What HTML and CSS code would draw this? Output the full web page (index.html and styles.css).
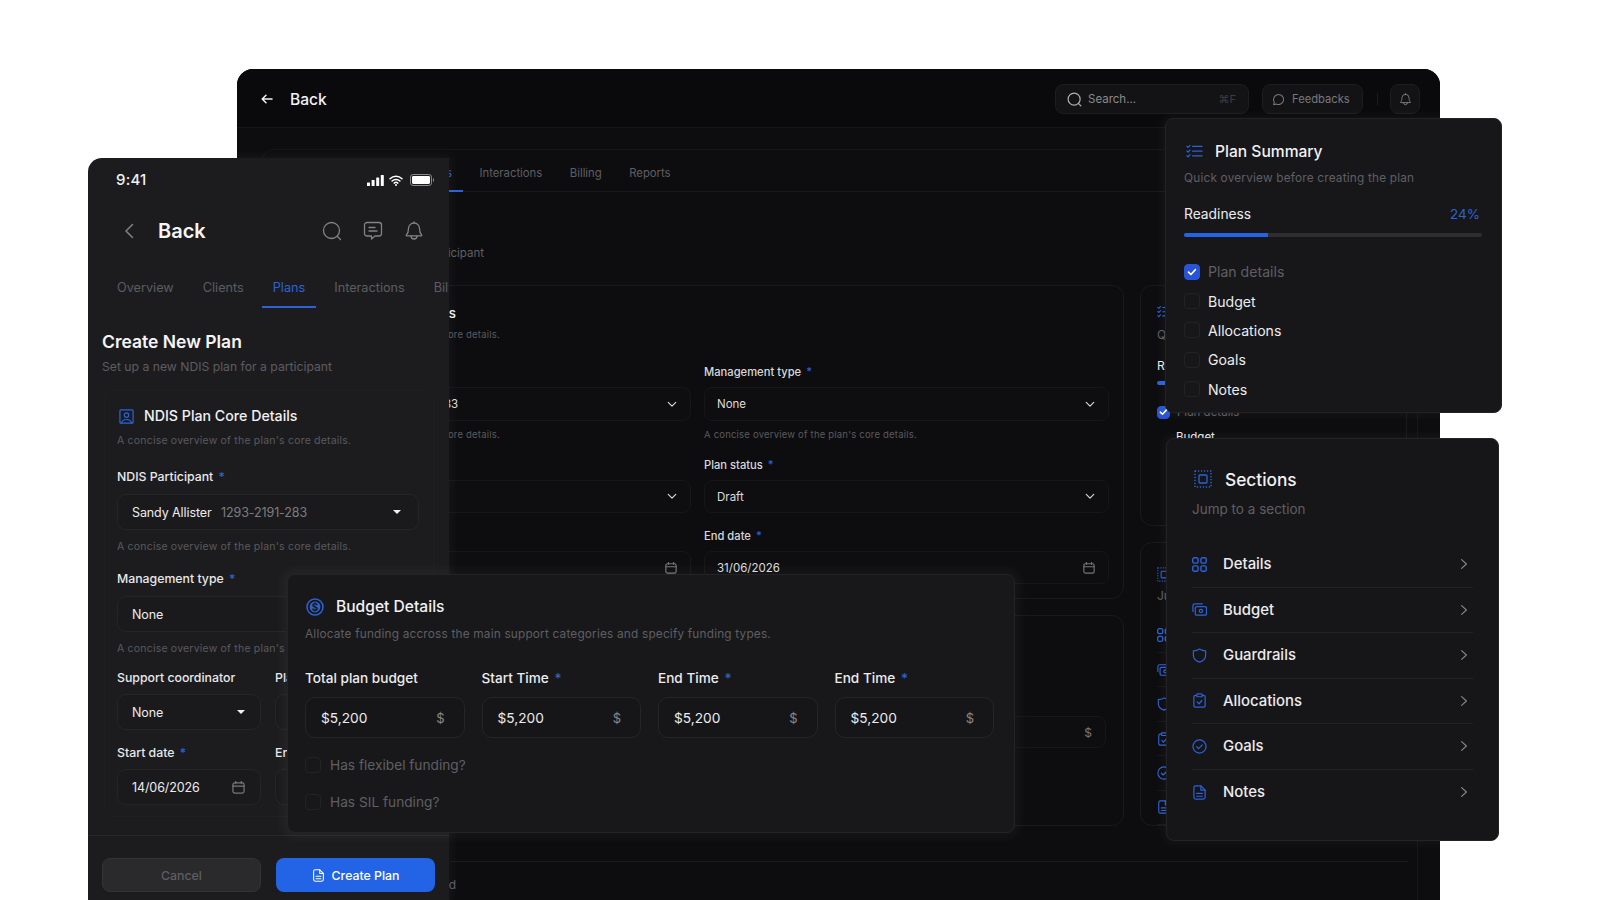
FILE: index.html
```html
<!DOCTYPE html>
<html lang="en">
<head>
<meta charset="utf-8">
<title>Create New Plan</title>
<link rel="stylesheet" href="styles.css">
</head>
<body>
<svg class="defs" aria-hidden="true">
  <symbol id="i-search" viewBox="0 0 20 20"><circle cx="9.5" cy="9.5" r="8"/><path d="M15.5 15.5l3 3"/></symbol>
  <symbol id="i-bubble" viewBox="0 0 16 16"><path d="M8 1.8a6.2 6.2 0 1 1-2.8 11.7L2 14.4l.9-3.1A6.2 6.2 0 0 1 8 1.8z"/></symbol>
  <symbol id="i-bell" viewBox="0 0 20 20"><path d="M10 2a5.5 5.5 0 0 0-5.5 5.5c0 3.6-.9 5.2-2.2 6.6-.2.3 0 .7.3.7h14.8c.4 0 .5-.4.3-.7-1.3-1.4-2.2-3-2.2-6.6A5.5 5.5 0 0 0 10 2z"/><path d="M10 1v1M7 15a3 3 0 0 0 6 0"/></symbol>
  <symbol id="i-chat" viewBox="0 0 20 20"><path d="M4 1.5h12A2.5 2.5 0 0 1 18.500 4v8.500a2.500 2.500 0 0 1-2.500 2.500h-4l-3.500 3v-3H4a2.500 2.500 0 0 1-2.500-2.500V4A2.500 2.500 0 0 1 4 1.500z"/><path d="M6 6.500h6M6 10h8"/></symbol>
  <symbol id="i-chev-r" viewBox="0 0 10 14"><path d="M2 1.500L8 7l-6 5.500"/></symbol>
  <symbol id="i-chev-d" viewBox="0 0 12 8"><path d="M1.500 1.500L6 6l4.500-4.500"/></symbol>
  <symbol id="i-cal" viewBox="0 0 14 14"><rect x="1" y="2" width="12" height="11" rx="2"/><path d="M1 5.500h12M4 .5v2M10 .5v2"/></symbol>
  <symbol id="i-list" viewBox="0 0 18 14"><path d="M1 2l1.200 1.200L4.200 1M1 7l1.200 1.200L4.200 6M1 12l1.200 1.200L4.200 11M7 2.200h10M7 7.200h10M7 12.200h10"/></symbol>
  <symbol id="i-sect" viewBox="0 0 18 18"><rect x="1" y="1" width="16" height="16" stroke-dasharray="1.200 1.800" stroke-linecap="butt" stroke-width="1.500"/><rect x="5" y="5" width="8" height="8" rx="1"/></symbol>
  <symbol id="i-grid" viewBox="0 0 14 14"><rect x=".7" y=".7" width="5" height="5" rx="1.500"/><rect x="8.300" y=".7" width="5" height="5" rx="1.500"/><rect x=".7" y="8.300" width="5" height="5" rx="1.500"/><rect x="8.300" y="8.300" width="5" height="5" rx="1.500"/></symbol>
  <symbol id="i-money" viewBox="0 0 16 14"><path d="M1 9V3a2 2 0 0 1 2-2h8"/><rect x="3.500" y="4" width="12" height="9" rx="1.500"/><circle cx="9.500" cy="8.500" r="1.700"/></symbol>
  <symbol id="i-shield" viewBox="0 0 16 16"><path d="M8 1c2 1.300 4 2 6.500 2v5c0 3.400-2.600 5.700-6.500 7C4.100 13.700 1.500 11.400 1.500 8V3C4 3 6 2.300 8 1z"/></symbol>
  <symbol id="i-clip" viewBox="0 0 14 16"><path d="M4 2.500H2.500A1.500 1.500 0 0 0 1 4v9.500A1.500 1.500 0 0 0 2.500 15h9a1.500 1.500 0 0 0 1.500-1.500V4a1.500 1.500 0 0 0-1.500-1.500H10"/><rect x="4" y="1" width="6" height="3" rx="1"/><path d="M4.500 9.500l2 2 3-3.500"/></symbol>
  <symbol id="i-goal" viewBox="0 0 16 16"><circle cx="8" cy="8" r="7"/><path d="M5 8.300l2.100 2 3.900-4"/></symbol>
  <symbol id="i-file" viewBox="0 0 14 16"><path d="M8.500 1H3a2 2 0 0 0-2 2v10a2 2 0 0 0 2 2h8a2 2 0 0 0 2-2V5.500z"/><path d="M8.500 1v4.500H13M4 9h6M4 12h6"/></symbol>
  <symbol id="i-person" viewBox="0 0 16 16"><rect x="1" y="1" width="14" height="14" rx="1"/><circle cx="8" cy="6.500" r="2.400"/><path d="M2.500 15c.8-2.500 2.700-3.800 5.500-3.800s4.700 1.300 5.500 3.800"/></symbol>
</svg>

<main class="canvas">

  <section class="win desktop">
    <header class="d-head">
      <svg class="ic d-arrow" viewBox="0 0 12 10"><path d="M11 5H1.500M5 1.200L1.200 5 5 8.800"/></svg>
      <span class="d-back">Back</span>
      <div class="d-tools">
        <div class="d-search">
          <svg class="ic d-search-ic"><use href="#i-search"/></svg>
          <span class="d-search-text">Search...</span>
          <span class="d-kbd">⌘F</span>
        </div>
        <div class="d-btn">
          <svg class="ic s13"><use href="#i-bubble"/></svg>
          <span>Feedbacks</span>
        </div>
        <span class="d-sep"></span>
        <div class="d-bell"><svg class="ic s13"><use href="#i-bell"/></svg></div>
      </div>
    </header>
    <div class="d-main">
      <nav class="d-tabs">
        <span class="d-tab">Overview</span>
        <span class="d-tab">Clients</span>
        <span class="d-tab active">Plans</span>
        <span class="d-tab">Interactions</span>
        <span class="d-tab">Billing</span>
        <span class="d-tab">Reports</span>
      </nav>
      <div class="d-title">
        <h2>Create New Plan</h2>
        <p>Set up a new NDIS plan for a participant</p>
      </div>
      <div class="d-columns">
        <div class="d-left">
          <div class="d-card d-card-a">
            <h3>NDIS Plan Core Details</h3>
            <p class="d-help d-cardsub">A concise overview of the plan's core details.</p>
            <div class="d-grid">
              <div class="d-field">
                <label>NDIS Participant <b>*</b></label>
                <div class="d-ctl"><span>Sandy Allister 1293-2191-283</span><svg class="ic d-chev"><use href="#i-chev-d"/></svg></div>
                <p class="d-help">A concise overview of the plan's core details.</p>
              </div>
              <div class="d-field">
                <label>Management type <b>*</b></label>
                <div class="d-ctl"><span>None</span><svg class="ic d-chev"><use href="#i-chev-d"/></svg></div>
                <p class="d-help">A concise overview of the plan's core details.</p>
              </div>
              <div class="d-field d-field-low">
                <label>Support coordinator</label>
                <div class="d-ctl"><span>None</span><svg class="ic d-chev"><use href="#i-chev-d"/></svg></div>
              </div>
              <div class="d-field d-field-low">
                <label>Plan status <b>*</b></label>
                <div class="d-ctl"><span>Draft</span><svg class="ic d-chev"><use href="#i-chev-d"/></svg></div>
              </div>
              <div class="d-field d-field-low">
                <label>Start date <b>*</b></label>
                <div class="d-ctl"><span>14/06/2026</span><svg class="ic s12 dim"><use href="#i-cal"/></svg></div>
              </div>
              <div class="d-field d-field-low">
                <label>End date <b>*</b></label>
                <div class="d-ctl"><span>31/06/2026</span><svg class="ic s12 dim"><use href="#i-cal"/></svg></div>
              </div>
            </div>
          </div>
          <div class="d-card d-card-b">
            <div class="d-ctl d-money"><span>$5,200</span><span class="dim">$</span></div>
          </div>
        </div>
        <aside class="d-right">
          <div class="d-card d-side-a">
            <svg class="ic s15 blue"><use href="#i-list"/></svg>
            <p class="ds-q">Quick overview</p>
            <p class="ds-r">Readiness</p>
            <div class="ds-bar"></div>
            <div class="ds-check"><span class="check on small"><svg viewBox="0 0 12 12"><path d="M2.500 6.200l2.400 2.300 4.400-4.800"/></svg></span><span>Plan details</span></div>
            <div class="ds-row">Budget</div>
          </div>
          <div class="d-card d-side-b">
            <svg class="ic s15 blue"><use href="#i-sect"/></svg>
            <p class="ds-j">Jump to a section</p>
            <ul class="ds-icons">
              <li><svg class="ic s14 blue"><use href="#i-grid"/></svg></li>
              <li><svg class="ic s14 blue"><use href="#i-money"/></svg></li>
              <li><svg class="ic s14 blue"><use href="#i-shield"/></svg></li>
              <li><svg class="ic s14 blue"><use href="#i-clip"/></svg></li>
              <li><svg class="ic s14 blue"><use href="#i-goal"/></svg></li>
              <li><svg class="ic s14 blue"><use href="#i-file"/></svg></li>
            </ul>
          </div>
        </aside>
      </div>
      <footer class="d-foot"><span>Draft saved</span></footer>
    </div>
  </section>

  <section class="win phone">
    <div class="p-status">
      <span class="p-time">9:41</span>
      <div class="p-sys">
        <svg class="p-signal" viewBox="0 0 17 11"><rect x="0" y="7.500" width="3" height="3.500" rx=".6"/><rect x="4.600" y="5" width="3" height="6" rx=".6"/><rect x="9.200" y="2.500" width="3" height="8.500" rx=".6"/><rect x="13.800" y="0" width="3" height="11" rx=".6"/></svg>
        <svg class="p-wifi" viewBox="0 0 14 11"><path d="M1 3.800a8.600 8.600 0 0 1 12 0M3.100 6a5.600 5.600 0 0 1 7.800 0M5.200 8.100a2.600 2.600 0 0 1 3.600 0"/><circle cx="7" cy="9.900" r="1"/></svg>
        <svg class="p-batt" viewBox="0 0 24 12"><rect x=".5" y=".5" width="21" height="11" rx="2.600" fill="none" stroke="#8a8a8c"/><rect x="2" y="2" width="18" height="8" rx="1.400"/><path d="M23 4v4c.7-.3 1-1 1-2s-.3-1.700-1-2z" fill="#8a8a8c"/></svg>
      </div>
    </div>
    <div class="p-nav">
      <svg class="ic p-chev" viewBox="0 0 10 16"><path d="M8.500 1.500L2 8l6.500 6.500"/></svg>
      <span class="p-back">Back</span>
      <div class="p-actions">
        <svg class="ic s20"><use href="#i-search"/></svg>
        <svg class="ic s20"><use href="#i-chat"/></svg>
        <svg class="ic s20"><use href="#i-bell"/></svg>
      </div>
    </div>
    <nav class="p-tabs">
      <span class="p-tab">Overview</span>
      <span class="p-tab">Clients</span>
      <span class="p-tab active">Plans</span>
      <span class="p-tab">Interactions</span>
      <span class="p-tab">Billing</span>
    </nav>
    <div class="p-body">
      <h1 class="p-title">Create New Plan</h1>
      <p class="p-sub">Set up a new NDIS plan for a participant</p>
      <div class="p-card">
        <div class="p-card-head">
          <svg class="ic s15 blue"><use href="#i-person"/></svg>
          <h2>NDIS Plan Core Details</h2>
        </div>
        <p class="p-help p-help-top">A concise overview of the plan's core details.</p>
        <label class="p-label p-first">NDIS Participant <b>*</b></label>
        <div class="p-ctl"><span>Sandy Allister <i class="p-code">1293-2191-283</i></span><span class="caret"></span></div>
        <p class="p-help">A concise overview of the plan's core details.</p>
        <label class="p-label">Management type <b>*</b></label>
        <div class="p-ctl"><span>None</span><span class="caret"></span></div>
        <p class="p-help">A concise overview of the plan's core details.</p>
        <div class="p-two">
          <div>
            <label class="p-label">Support coordinator</label>
            <div class="p-ctl"><span>None</span><span class="caret"></span></div>
          </div>
          <div>
            <label class="p-label">Plan status <b>*</b></label>
            <div class="p-ctl"><span>Draft</span><span class="caret"></span></div>
          </div>
          <div>
            <label class="p-label p-label-date">Start date <b>*</b></label>
            <div class="p-ctl"><span>14/06/2026</span><svg class="ic s13 dim"><use href="#i-cal"/></svg></div>
          </div>
          <div>
            <label class="p-label p-label-date">End date <b>*</b></label>
            <div class="p-ctl"><span>31/06/2026</span><svg class="ic s13 dim"><use href="#i-cal"/></svg></div>
          </div>
        </div>
      </div>
    </div>
    <footer class="p-foot">
      <button class="btn btn-off" type="button">Cancel</button>
      <button class="btn btn-main" type="button"><svg class="ic s13"><use href="#i-file"/></svg>Create Plan</button>
    </footer>
  </section>

  <section class="win budget">
    <div class="b-head">
      <svg class="ic b-ic" viewBox="0 0 18 18"><circle cx="9" cy="9" r="8"/><circle class="solid" cx="9" cy="9" r="5.400"/></svg>
      <span class="b-dollar">$</span>
      <h2>Budget Details</h2>
    </div>
    <p class="b-sub">Allocate funding accross the main support categories and specify funding types.</p>
    <div class="b-grid">
      <div><label class="b-label">Total plan budget</label><div class="b-ctl"><span>$5,200</span><span class="b-unit">$</span></div></div>
      <div><label class="b-label">Start Time <b>*</b></label><div class="b-ctl"><span>$5,200</span><span class="b-unit">$</span></div></div>
      <div><label class="b-label">End Time <b>*</b></label><div class="b-ctl"><span>$5,200</span><span class="b-unit">$</span></div></div>
      <div><label class="b-label">End Time <b>*</b></label><div class="b-ctl"><span>$5,200</span><span class="b-unit">$</span></div></div>
    </div>
    <div class="b-check b-check-1"><span class="check"></span><span>Has flexibel funding?</span></div>
    <div class="b-check"><span class="check"></span><span>Has SIL funding?</span></div>
  </section>

  <section class="win summary">
    <div class="s-head">
      <svg class="ic sum-ic blue"><use href="#i-list"/></svg>
      <h2>Plan Summary</h2>
    </div>
    <p class="s-sub">Quick overview before creating the plan</p>
    <div class="s-ready"><span>Readiness</span><span class="s-pct">24%</span></div>
    <div class="s-bar"><div class="s-fill" style="width:28.3%"></div></div>
    <ul class="s-list">
      <li class="off"><span class="check on"><svg viewBox="0 0 12 12"><path d="M2.500 6.200l2.400 2.300 4.400-4.800"/></svg></span>Plan details</li>
      <li><span class="check"></span>Budget</li>
      <li><span class="check"></span>Allocations</li>
      <li><span class="check"></span>Goals</li>
      <li><span class="check"></span>Notes</li>
    </ul>
  </section>

  <section class="win sections">
    <div class="n-head">
      <svg class="ic n-ic blue"><use href="#i-sect"/></svg>
      <h2>Sections</h2>
    </div>
    <p class="n-sub">Jump to a section</p>
    <ul class="n-list">
      <li><svg class="ic s15 blue"><use href="#i-grid"/></svg><span>Details</span><svg class="ic n-chev"><use href="#i-chev-r"/></svg></li>
      <li><svg class="ic s15 blue"><use href="#i-money"/></svg><span>Budget</span><svg class="ic n-chev"><use href="#i-chev-r"/></svg></li>
      <li><svg class="ic s15 blue"><use href="#i-shield"/></svg><span>Guardrails</span><svg class="ic n-chev"><use href="#i-chev-r"/></svg></li>
      <li><svg class="ic s15 blue"><use href="#i-clip"/></svg><span>Allocations</span><svg class="ic n-chev"><use href="#i-chev-r"/></svg></li>
      <li><svg class="ic s15 blue"><use href="#i-goal"/></svg><span>Goals</span><svg class="ic n-chev"><use href="#i-chev-r"/></svg></li>
      <li><svg class="ic s15 blue"><use href="#i-file"/></svg><span>Notes</span><svg class="ic n-chev"><use href="#i-chev-r"/></svg></li>
    </ul>
  </section>

</main>
</body>
</html>
```

FILE: styles.css
```css
* { box-sizing: border-box; }
html, body { margin: 0; padding: 0; background: #fff; }
body { font-family: Inter, "Liberation Sans", sans-serif; color: #f1f1f3; overflow: hidden; }
h1, h2, h3, p, ul { margin: 0; padding: 0; font-weight: inherit; }
ul { list-style: none; }
i { font-style: normal; }
.defs { position: absolute; width: 0; height: 0; }

.canvas { position: relative; width: 1600px; height: 900px; overflow: hidden; background: #fff; }
.win { position: absolute; }

.ic { fill: none; stroke: currentColor; stroke-width: 1.3; stroke-linecap: round; stroke-linejoin: round; flex: none; }
.s12 { width: 12px; height: 12px; }
.s13 { width: 13px; height: 13px; }
.s14 { width: 14px; height: 14px; }
.s15 { width: 15px; height: 15px; }
.s20 { width: 20px; height: 20px; }
.blue { color: #2c62d6; }
.dim { color: #77777b; }
.solid { fill: #2c62d6; stroke: none; }

.check { width: 16px; height: 16px; flex: none; border-radius: 4px; border: 1px solid #232326; display: inline-flex; align-items: center; justify-content: center; }
.check.on { background: #2a54d8; border-color: #2a54d8; }
.check svg { width: 12px; height: 12px; fill: none; stroke: #fff; stroke-width: 1.7; stroke-linecap: round; stroke-linejoin: round; }
.check.small { width: 13px; height: 13px; }

/* Desktop window */
.desktop { left: 237px; top: 69px; width: 1203px; height: 831px; background: #0d0d0f; border-radius: 16px 16px 0 0; z-index: 1; overflow: hidden; }
.d-head { height: 59px; display: flex; align-items: center; padding: 2px 20px 0 24px; border-bottom: 1px solid #151517; background: #0a0a0c; }
.d-arrow { width: 12px; height: 10px; color: #f1f1f3; stroke-width: 1.5; }
.d-back { margin-left: 17px; font-size: 15.6px; font-weight: 500; }
.d-tools { margin-left: auto; display: flex; align-items: center; }
.d-search { width: 194px; height: 30px; display: flex; align-items: center; gap: 6px; padding: 0 12px 0 11px; background: #131315; border: 1px solid #1d1d20; border-radius: 8px; color: #8a8a8e; font-size: 11.5px; }
.d-search-ic { width: 15px; height: 15px; color: #b0b0b4; stroke-width: 1.6; }
.d-search-text { flex: 1; }
.d-kbd { color: #3d3d41; font-size: 11px; }
.d-btn { width: 101px; height: 30px; margin-left: 13px; display: flex; align-items: center; gap: 7px; padding-left: 9px; background: #131315; border: 1px solid #1d1d20; border-radius: 8px; color: #77777b; font-size: 11.2px; }
.d-sep { width: 1px; height: 12px; margin: 0 12px 0 14px; background: #1c1c1f; }
.d-bell { width: 30px; height: 30px; display: flex; align-items: center; justify-content: center; background: #131315; border: 1px solid #1d1d20; border-radius: 8px; color: #88888c; }

.d-main { margin: 21px 22px 0 25px; border: 1px solid #161618; border-bottom: 0; border-radius: 12px 12px 0 0; height: 751px; }
.d-tabs { height: 42px; display: flex; gap: 5.5px; padding-left: 7px; border-bottom: 1px solid #18181b; }
.d-tab { padding: 5px 11px 0; display: flex; align-items: center; font-size: 11.3px; color: #5f5f63; border-bottom: 2px solid transparent; margin-bottom: -1px; }
.d-tab.active { color: #2c62d6; border-bottom-color: #2c62d6; }
.d-title { height: 93px; padding: 24px 0 0 4px; }
.d-title h2 { font-size: 18px; line-height: 22px; font-weight: 600; }
.d-title p { margin-top: 7px; font-size: 11.5px; line-height: 16px; color: #5f5f63; }
.d-columns { display: flex; gap: 16px; padding-right: 10px; height: 541px; }
.d-left { width: 861px; flex: none; display: flex; flex-direction: column; gap: 16px; }
.d-right { flex: 1; display: flex; flex-direction: column; gap: 16px; min-width: 0; }
.d-card { border: 1px solid #19191c; border-radius: 12px; }
.d-card-a { height: 314px; padding: 17px 15px 0 23px; }
.d-card-a h3 { font-size: 13.3px; line-height: 20px; font-weight: 500; padding-left: 25px; }
.d-cardsub { margin-top: 5px; }
.d-help { font-size: 9.5px; line-height: 14px; letter-spacing: .2px; color: #5a5a5e; }
.d-grid { display: grid; grid-template-columns: 404px 405px; column-gap: 13px; margin-top: 22px; }
.d-field { padding-bottom: 15px; }
.d-field label { display: block; font-size: 11.2px; line-height: 16px; font-weight: 500; color: #d8d8da; margin-bottom: 7px; }
.d-field label b, .p-label b, .b-label b { color: #2c62d6; font-weight: 500; margin-left: 2px; }
.d-field .d-help { margin-top: 7px; }
.d-ctl { height: 34px; display: flex; align-items: center; justify-content: space-between; padding: 0 13px 0 12px; background: #0e0e10; border: 1px solid #171719; border-radius: 8px; font-size: 11.5px; color: #dcdcde; }
.d-field-low .d-ctl { height: 33px; }
.d-chev { width: 10px; height: 7px; color: #d8d8da; stroke-width: 1.4; }
.d-card-b { height: 211px; padding: 100px 17px 0 4px; }
.d-money { height: 32px; margin-left: 442px; }
.d-money .dim { font-size: 12px; }
.d-side-a { height: 248px; padding: 18px 16px 0; }
.d-side-a .ic { display: block; }
.ds-q { margin-top: 8px; font-size: 12px; line-height: 16px; color: #5f5f63; white-space: nowrap; }
.ds-r { margin-top: 15px; font-size: 12px; line-height: 16px; color: #e8e8ea; }
.ds-bar { margin-top: 7px; width: 100%; height: 4px; background: #2c62d6; border-radius: 2px; }
.ds-check { margin-top: 20px; display: flex; align-items: center; gap: 7px; font-size: 11.5px; line-height: 14px; color: #5f5f63; }
.ds-row { margin: 10px 0 0 19px; font-size: 11.5px; line-height: 16px; color: #e8e8ea; }
.d-side-b { flex: 1; padding: 24px 16px 0; }
.d-side-b .ic { display: block; }
.ds-j { margin-top: 6px; font-size: 12px; line-height: 16px; color: #5f5f63; white-space: nowrap; }
.ds-icons { margin-top: 15px; }
.ds-icons li { height: 34.4px; display: flex; align-items: center; border-bottom: 1px solid #18181b; }
.d-foot { margin: 35px 9px 0 188px; border-top: 1px solid #1b1b1e; padding: 15px 0 0 0; font-size: 12px; color: #5f5f63; }
.d-foot span { display: block; margin-left: -60px; }

/* Phone window */
.phone { left: 88px; top: 158px; width: 361px; height: 742px; background: #1c1c1e; border-radius: 14px 0 0 0; z-index: 2; overflow: hidden; box-shadow: 0 0 8px 4px rgba(255,255,255,.035); display: flex; flex-direction: column; }
.p-status { height: 44px; flex: none; display: flex; align-items: center; justify-content: space-between; padding: 0 15px 0 28px; }
.p-time { font-size: 15px; font-weight: 500; letter-spacing: .2px; margin-top: -2px; }
.p-sys { display: flex; align-items: center; gap: 5px; }
.p-signal { width: 17px; height: 11px; fill: #fff; }
.p-wifi { width: 14px; height: 11px; fill: #fff; stroke: #fff; stroke-width: 1.5; }
.p-wifi path { fill: none; stroke-linecap: round; }
.p-wifi circle { stroke: none; }
.p-batt { width: 24px; height: 12px; fill: #fff; margin-left: 2px; }
.p-nav { height: 58px; flex: none; display: flex; align-items: center; padding: 0 25px 0 36px; color: #828286; }
.p-chev { width: 10px; height: 16px; stroke-width: 1.5; }
.p-back { margin-left: 24px; font-size: 20px; font-weight: 600; color: #f5f5f7; }
.p-actions { margin-left: auto; display: flex; gap: 21px; }
.p-tabs { height: 40px; margin-top: 8px; flex: none; display: flex; gap: 7px; padding-left: 18px; white-space: nowrap; }
.p-tab { padding: 0 11px; display: flex; align-items: center; font-size: 12.7px; color: #5d5d61; border-bottom: 2px solid transparent; }
.p-tab.active { color: #2c62d6; border-bottom-color: #2c62d6; }
.p-body { padding: 22px 15px 0 14px; flex: 1; }
.p-title { font-size: 17.5px; line-height: 24px; font-weight: 600; color: #f5f5f7; }
.p-sub { margin-top: 4px; font-size: 12.2px; line-height: 18px; color: #5d5d61; }
.p-card { margin-top: 14px; margin-left: 2px; height: 427px; padding: 17px 14px 0 12px; border: 1px solid #1f1f22; border-radius: 10px; }
.p-card-head { display: flex; align-items: center; gap: 10px; padding-left: 2px; height: 16px; }
.p-card-head h2 { font-size: 14.2px; line-height: 16px; font-weight: 500; }
.p-help { margin-top: 10px; font-size: 10.5px; line-height: 14px; letter-spacing: .2px; color: #5a5a5e; }
.p-help-top { margin-top: 10px; }
.p-label { display: block; margin: 17px 0 9px; font-size: 12.3px; line-height: 16px; font-weight: 500; color: #e8e8ea; }
.p-first { margin-top: 21px; }
.p-ctl { height: 36px; display: flex; align-items: center; justify-content: space-between; padding: 0 17px 0 14px; background: #1a1a1c; border: 1px solid #252528; border-radius: 9px; font-size: 12.5px; letter-spacing: -.1px; color: #ececee; }
.p-code { margin-left: 6px; color: #7d7d81; }
.p-two { display: grid; grid-template-columns: 144px 144px; column-gap: 14px; }
.p-two .p-label { margin: 14px 0 8px; }
.p-two .p-label-date { margin-top: 15px; }
.p-two .p-ctl { padding-right: 15px; }
.caret { width: 0; height: 0; border-left: 4px solid transparent; border-right: 4px solid transparent; border-top: 4px solid #f1f1f3; }
.p-foot { height: 65px; flex: none; display: flex; gap: 15px; padding: 22px 14px 0; border-top: 1px solid #28282b; }
.btn { width: 159px; height: 34px; border-radius: 8px; border: 0; font: 500 12.3px Inter, "Liberation Sans", sans-serif; display: flex; align-items: center; justify-content: center; gap: 7px; }
.btn-off { background: #2a2a2c; border: 1px solid #333336; color: #5e5e62; }
.btn-main { background: #2264e5; color: #fff; }

/* Budget panel */
.budget { left: 287px; top: 574px; width: 728px; height: 259px; padding: 21px 20px 0 17px; background: #18181a; border: 1px solid #242427; border-radius: 8px; z-index: 3; box-shadow: 0 0 10px 6px rgba(255,255,255,.035); }
.b-head { position: relative; display: flex; align-items: center; gap: 12px; height: 22px; padding-left: 1px; }
.b-head h2 { font-size: 15.6px; line-height: 22px; font-weight: 500; }
.b-ic { width: 18px; height: 18px; color: #2c62d6; stroke-width: 1.5; }
.b-dollar { position: absolute; left: 1px; top: 0; width: 18px; text-align: center; font-size: 10px; line-height: 22px; font-weight: 700; color: #18181a; }
.b-sub { margin-top: 7px; font-size: 11.8px; line-height: 18px; letter-spacing: .2px; color: #5f5f63; }
.b-grid { display: grid; grid-template-columns: repeat(4, 159.5px); column-gap: 17px; margin-top: 26px; }
.b-label { display: block; font-size: 13.6px; line-height: 18px; font-weight: 500; color: #ececee; margin-bottom: 10px; }
.b-ctl { height: 41px; display: flex; align-items: center; justify-content: space-between; padding: 0 19px 0 15px; background: #161618; border: 1px solid #252528; border-radius: 10px; font-size: 13.7px; color: #ececee; }
.b-unit { font-size: 13px; color: #88888c; }
.b-check { display: flex; align-items: center; gap: 9px; margin-top: 21px; font-size: 13.7px; color: #5f5f63; }
.b-check-1 { margin-top: 19px; }

/* Plan summary */
.summary { left: 1165px; top: 118px; width: 337px; height: 295px; padding: 21px 19px 0 18px; background: #17171a; border: 1px solid #222225; border-radius: 8px; z-index: 3; box-shadow: 0 0 8px 4px rgba(255,255,255,.035); }
.s-head { display: flex; align-items: center; gap: 12px; height: 22px; }
.s-head h2 { font-size: 15.6px; font-weight: 500; }
.sum-ic { width: 17px; height: 14px; margin-left: 2px; }
.s-sub { margin-top: 7px; font-size: 11.8px; line-height: 18px; letter-spacing: .2px; color: #5f5f63; }
.s-ready { margin-top: 18px; display: flex; justify-content: space-between; padding-right: 2px; font-size: 13.8px; line-height: 18px; color: #ececee; }
.s-pct { color: #2c62d6; font-size: 13.5px; }
.s-bar { margin-top: 10px; height: 4px; background: #2e2e31; border-radius: 2px; overflow: hidden; }
.s-fill { height: 100%; background: #2264e5; }
.s-list { margin-top: 20px; }
.s-list li { height: 29.4px; display: flex; align-items: center; gap: 8px; font-size: 14.1px; color: #ececee; }
.s-list li.off { color: #5f5f63; }

/* Sections */
.sections { left: 1166px; top: 438px; width: 333px; height: 403px; padding: 28px 25px 0 25px; background: #161618; border: 1px solid #242427; border-radius: 8px; z-index: 3; box-shadow: 0 0 8px 4px rgba(255,255,255,.035); }
.n-head { display: flex; align-items: center; gap: 13px; height: 24px; padding-left: 2px; }
.n-head h2 { font-size: 17.3px; font-weight: 500; }
.n-ic { width: 18px; height: 18px; }
.n-sub { margin-top: 9px; font-size: 13.5px; line-height: 18px; color: #5f5f63; }
.n-list { margin-top: 24px; }
.n-list li { height: 45.5px; display: flex; align-items: center; gap: 16px; font-size: 14.9px; font-weight: 500; color: #ececee; border-bottom: 1px solid #232326; }
.n-list li:last-child { border-bottom: 0; }
.n-list li span { flex: 1; }
.n-chev { width: 8px; height: 12px; margin-right: 5px; color: #88888c; stroke-width: 1.4; }
```
